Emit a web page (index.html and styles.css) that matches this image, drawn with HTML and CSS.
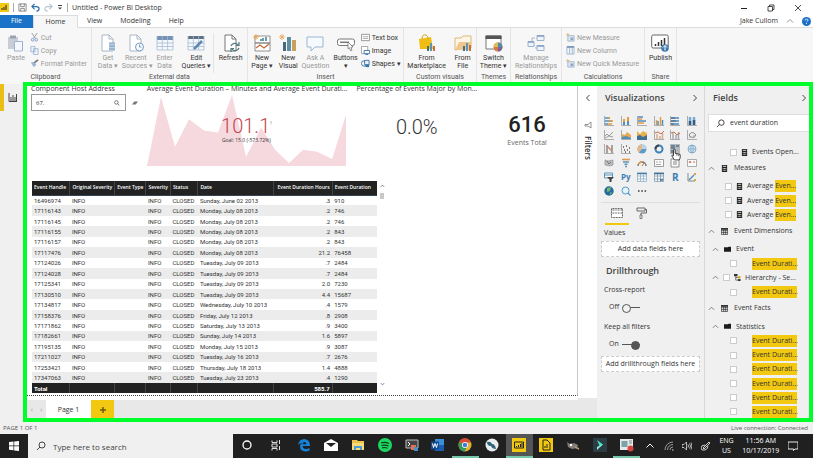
FILE: index.html
```html
<!DOCTYPE html>
<html lang="en">
<head>
<meta charset="utf-8">
<title>Untitled - Power BI Desktop</title>
<link rel="stylesheet" href="styles.css">
</head>
<body>
<svg class="defs" aria-hidden="true">
  <symbol id="page" viewBox="0 0 18 18"><path d="M3 1h7l4 4v12H3z" fill="#fff" stroke="currentColor"/><path d="M10 1v4h4" fill="none" stroke="currentColor"/></symbol>
  <symbol id="chevr" viewBox="0 0 8 8"><path d="M2.500 1l3 3-3 3" fill="none" stroke="#444"/></symbol>
  <symbol id="up" viewBox="0 0 8 8"><path d="M1 5.500l3-3 3 3" fill="none" stroke="currentColor" stroke-width=".9"/></symbol>
  <symbol id="mag" viewBox="0 0 10 10"><circle cx="6" cy="4" r="3" fill="none" stroke="currentColor"/><path d="M4 6L1 9" stroke="currentColor"/></symbol>
  <symbol id="calc" viewBox="0 0 8 8"><path d="M1 0h6v8H1z" fill="#222"/><path d="M2 1.500h4M2 4h1m.5 0h1m.5 0h1M2 6h1m.5 0h1m.5 0h1" stroke="#eee"/></symbol>
  <symbol id="grid" viewBox="0 0 8 8"><path d="M.5.500h7v7h-7zM.5 3h7M.5 5.200h7M3 1v6.500M5.300 1v6.500" fill="none" stroke="#333" stroke-width=".8"/><path d="M0 0h8v2H0z" fill="#333"/></symbol>
  <symbol id="folder" viewBox="0 0 9 8"><path d="M0 1h5l1-1h3v7H0z" fill="#1c1c1c"/></symbol>
  <symbol id="axes" viewBox="0 0 10 10"><path d="M.5 0v9.500H10" fill="none" stroke="#999" stroke-width=".8"/></symbol>
</svg>
<div class="app">
  <header class="titlebar">
    <svg class="logo" viewBox="0 0 9 9"><path d="M0 0h9v9H0z" fill="#f2c811"/><path d="M2 7V5M4 7V4M6 7V2" stroke="#222"/></svg>
    <span class="bar"></span>
    <button class="ib" aria-label="Save"><svg viewBox="0 0 10 10"><path d="M1 1h8v8H1zM3 1v3h4V1M3 9V6h4v3" fill="none" stroke="#666" stroke-width=".8"/></svg></button>
    <button class="ib" aria-label="Undo"><svg viewBox="0 0 10 10"><path d="M4 1L1 4l3 3M1 4h5q3 0 3 2.500T6 9" fill="none" stroke="#2d6dae" stroke-width="1.300"/></svg></button>
    <button class="ib" aria-label="Redo"><svg viewBox="0 0 10 10"><path d="M6 1l3 3-3 3M9 4H4Q1 4 1 6.500T4 9" fill="none" stroke="#b8c4d0" stroke-width="1.300"/></svg></button>
    <button class="ib small" aria-label="Customize"><svg viewBox="0 0 6 6"><path d="M1 1h4" stroke="#444"/><path d="M1 3h4L3 5z" fill="#444"/></svg></button>
    <span class="bar"></span>
    <h1>Untitled - Power BI Desktop</h1>
    <div class="win">
      <button aria-label="Minimize"><svg viewBox="0 0 8 8"><path d="M1 4.500h6" stroke="#222"/></svg></button>
      <button aria-label="Restore"><svg viewBox="0 0 8 8"><path d="M1 2.500h4.500V7H1zM2.500 2.500V1H7v4.500H5.500" fill="none" stroke="#222" stroke-width=".8"/></svg></button>
      <button aria-label="Close"><svg viewBox="0 0 8 8"><path d="M1 1l6 6M7 1L1 7" stroke="#222" stroke-width=".8"/></svg></button>
    </div>
  </header>
  <nav class="tabs">
    <button class="file">File</button><button class="on">Home</button><button>View</button><button>Modeling</button><button>Help</button>
    <span class="user">Jake Cullom</span>
    <svg class="s8 grey" viewBox="0 0 8 8"><use href="#up"/></svg>
    <svg class="s9" viewBox="0 0 9 9"><circle cx="4.500" cy="4.500" r="4.500" fill="#1a6fc9"/><path d="M3 3.500Q3 2 4.500 2T6 3.300Q6 4 4.500 5M4.500 6v1" fill="none" stroke="#fff" stroke-width=".8"/></svg>
  </nav>
  <section class="ribbon">
    <div class="group clip">
      <div class="tools">
        <button class="big off"><svg viewBox="0 0 18 18"><path d="M1 3h10v12H1z" fill="#c9ced6"/><path d="M3 1.500h6v3H3z" fill="#9aa3b0"/><path d="M7.500 7.500h8v9.500h-8z" fill="#f4f8fc" stroke="#9cb2cc"/></svg>Paste</button>
        <div class="list off">
          <button><svg viewBox="0 0 10 10"><path d="M2 0l4 6M8 0L4 6" stroke="#999"/><circle cx="3" cy="7.500" r="1.500" fill="none" stroke="#7b9dc4"/><circle cx="7" cy="7.500" r="1.500" fill="none" stroke="#7b9dc4"/></svg>Cut</button>
          <button><svg viewBox="0 0 10 10"><path d="M1 .5h4.500v6H1zM4 3h5v6.500H4z" fill="#eef4fa" stroke="#8ca6c4" stroke-width=".8"/></svg>Copy</button>
          <button><svg viewBox="0 0 10 10"><path d="M1 4l4-1 2 4-3 2z" fill="#9cb4d0"/><path d="M5 4l4-3" stroke="#777" stroke-width="2"/></svg>Format Painter</button>
        </div>
      </div>
      <h2>Clipboard</h2>
    </div>
    <div class="group ext">
      <div class="tools">
        <button class="big off"><svg class="pale" viewBox="0 0 18 18"><use href="#page"/><path d="M10 9h6v8h-6z" fill="#b9cde4"/><path d="M10 9h6M10 12h6M10 15h6" stroke="#7d9cc0"/></svg>Get<br>Data <i>▾</i></button>
        <button class="big off"><svg class="pale" viewBox="0 0 18 18"><use href="#page"/><circle cx="12.500" cy="13" r="4" fill="#f7fbff" stroke="#7d9cc0"/><path d="M12.500 10.500V13h2" fill="none" stroke="#7d9cc0"/></svg>Recent<br>Sources <i>▾</i></button>
        <button class="big off"><svg viewBox="0 0 18 18"><path d="M1 2h16v14H1z" fill="#f4f8fc"/><path d="M1 2h16v4H1z" fill="#7591b5"/><path d="M1 9h16M1 12.500h16M1 16h16M1 2v14M6.300 2v14M11.600 2v14M17 2v14" stroke="#a8bbd3" stroke-width=".8"/></svg>Enter<br>Data</button>
        <button class="big"><svg viewBox="0 0 18 18"><path d="M1 2h16v14H1z" fill="#f4f8fc"/><path d="M1 2h16v3H1z" fill="#5f7184"/><path d="M1 9h16M1 12.500h16M1 16h16M1 2v14M6.300 2v14M11.600 2v14M17 2v14" stroke="#a8bbd3" stroke-width=".8"/><path d="M7 15l8-8" stroke="#6486ad" stroke-width="2.500"/></svg>Edit<br>Queries <i>▾</i></button>
        <button class="big refresh"><svg viewBox="0 0 18 18"><use href="#page"/><path d="M9 12a4 4 0 017-1M17 8v3.500h-3M17 14a4 4 0 01-7 1M9 18v-3.500h3" fill="none" stroke="#517a80" stroke-width="1.200"/></svg>Refresh</button>
      </div>
      <h2>External data</h2>
    </div>
    <div class="group ins">
      <div class="tools">
        <button class="big"><svg viewBox="0 0 18 18"><path d="M2 2h15v7H2zM2 9h15v8H2z" fill="#fff" stroke="#777" stroke-width=".8"/><path d="M8 7V5M10 7V4M13 7V3" stroke="#3b7f93" stroke-width="1.500"/><path d="M3 14l4-3 4 3 5-4" fill="none" stroke="#c76b3c" stroke-width="1.300"/><path d="M3 0v6M0 3h6M1 1l4 4M5 1L1 5" stroke="#eba24d" stroke-width=".8"/></svg>New<br>Page <i>▾</i></button>
        <button class="big"><svg viewBox="0 0 18 18"><path d="M4 8h3v9H4z" fill="#47697a"/><path d="M8 3h4v14H8z" fill="#5e8fa2"/><path d="M13 6h4v11h-4z" fill="#c8a15e"/><path d="M3 0v6M0 3h6M1 1l4 4M5 1L1 5" stroke="#eba24d" stroke-width=".8"/></svg>New<br>Visual</button>
        <button class="big off"><svg viewBox="0 0 18 18"><path d="M1 3h16v10H9l-4 4v-4H1z" fill="#f5faff" stroke="#9cb4d3"/></svg>Ask A<br>Question</button>
        <button class="big"><svg viewBox="0 0 18 18"><rect x=".5" y="5" width="17" height="6.500" rx="2" fill="#fff" stroke="#777"/><path d="M3 8.300h9" stroke="#777" stroke-width="1.500"/><path d="M11 8l5 5-2 .2 1 3-1.500.5-1-3-1.500 1z" fill="#fff" stroke="#666" stroke-width=".7"/></svg>Buttons<br><i>▾</i></button>
        <div class="list">
          <button><svg viewBox="0 0 10 10"><path d="M.5 1.500h9v7h-9z" fill="#fff" stroke="#777" stroke-width=".8"/><path d="M2 4h2M5 4h3M2 6h6" stroke="#888" stroke-width=".8"/></svg>Text box</button>
          <button><svg viewBox="0 0 10 10"><path d="M.5.500h7v8h-7z" fill="#fff" stroke="#888" stroke-width=".8"/><path d="M3.500 5h6v3.500h-6zM5 9.500h3" fill="#fff" stroke="#3971ab"/></svg>Image</button>
          <button><svg viewBox="0 0 10 10"><circle cx="3.500" cy="5" r="3" fill="none" stroke="#3971ab"/><path d="M4 1.500h5v5H4z" fill="#e8f1fa" stroke="#3971ab"/><path d="M5 6h4v3H5z" fill="#3971ab"/></svg>Shapes <i>▾</i></button>
        </div>
      </div>
      <h2>Insert</h2>
    </div>
    <div class="group cus">
      <div class="tools">
        <button class="big"><svg viewBox="0 0 18 18"><path d="M1 5l12-2 2 12H2z" fill="#efbd13"/><path d="M4 5q0-5 4-4 2 1 2 4" fill="none" stroke="#d5a510"/><path d="M10 17V12" stroke="#456e83" stroke-width="2"/><path d="M13 17V9" stroke="#5c95ad" stroke-width="2"/><path d="M16 17v-5" stroke="#be704b" stroke-width="2"/></svg>From<br>Marketplace</button>
        <button class="big"><svg viewBox="0 0 18 18"><path d="M1 16V4h6l2-2h8v12z" fill="#fdf5e6" stroke="#ddb77a"/><path d="M1 16l4-8h12v8z" fill="#edc78d"/><path d="M10 17v-5" stroke="#456e83" stroke-width="2"/><path d="M13 17V9" stroke="#5c95ad" stroke-width="2"/><path d="M16 17v-6" stroke="#be704b" stroke-width="2"/></svg>From<br>File</button>
      </div>
      <h2>Custom visuals</h2>
    </div>
    <div class="group">
      <div class="tools"><button class="big"><svg viewBox="0 0 18 18"><path d="M1 2h15v13H1z" fill="#fff" stroke="#777"/><path d="M.5 1.500h16V5H.5z" fill="#555"/><circle cx="13" cy="13" r="4.500" fill="#d7774e"/><path d="M13 13V8.500a4.500 4.500 0 014.500 4.500z" fill="#4a8eac"/><path d="M13 13h4.500a4.500 4.500 0 01-4.500 4.500z" fill="#7d6295"/><path d="M13 13H8.500A4.500 4.500 0 0113 8.500z" fill="#ddbd56"/></svg>Switch<br>Theme <i>▾</i></button></div>
      <h2>Themes</h2>
    </div>
    <div class="group">
      <div class="tools"><button class="big off"><svg viewBox="0 0 18 18"><path d="M8 4H5v7h3M8 14h4" fill="none" stroke="#a9b7c9"/><path d="M10 1.500h7v5h-7zM1 7.500h6v5H1zM10 11.500h7v5h-7z" fill="#eef4fb" stroke="#9cb2cd"/><path d="M10 2h7M1 8h6M10 12h7" stroke="#86a0c0" stroke-width="1.500"/></svg>Manage<br>Relationships</button></div>
      <h2>Relationships</h2>
    </div>
    <div class="group calc">
      <div class="tools"><div class="list off">
        <button><svg viewBox="0 0 10 10"><path d="M2 3h7v6H2z" fill="#dce7f3" stroke="#a5b8ce"/><path d="M5 5h3v3H5z" fill="#8ca6c4"/><path d="M0 2h4M2 0v4" stroke="#d9b98c"/></svg>New Measure</button>
        <button><svg viewBox="0 0 10 10"><path d="M1 1h8v8H1zM4 1v8M7 1v8" fill="#eef4fb" stroke="#a5b8ce"/><path d="M1 1h8" stroke="#7e99b8" stroke-width="2"/></svg>New Column</button>
        <button><svg viewBox="0 0 10 10"><path d="M2 3h7v6H2z" fill="#dce7f3" stroke="#a5b8ce"/><path d="M5 5h3v3H5z" fill="#8ca6c4"/><path d="M0 2h4M2 0v4" stroke="#d9b98c"/></svg>New Quick Measure</button>
      </div></div>
      <h2>Calculations</h2>
    </div>
    <div class="group">
      <div class="tools"><button class="big"><svg viewBox="0 0 18 18"><rect x=".7" y="1" width="16.500" height="13" rx="1.500" fill="#fff" stroke="#666"/><path d="M4.500 12v-2M7.500 12V8M10.500 12V6M13.500 12V4" stroke="#333" stroke-width="1.500"/><circle cx="14" cy="14" r="3.800" fill="#3d78ad"/><path d="M14 16.500v-5M12 13.500l2-2 2 2" fill="none" stroke="#fff"/></svg>Publish</button></div>
      <h2>Share</h2>
    </div>
    <div class="rest"></div>
  </section>

  <main class="work">
    <aside class="rail"><button aria-label="Report"><svg viewBox="0 0 9 9"><path d="M1 0v8.500h8M3 8V4M5 8V2M7 8V4M8.500 8V1" fill="none" stroke="#444"/></svg></button></aside>
    <section class="center">
      <div class="canvas">
        <div class="cards">
          <div class="card slicer"><h3><label for="host">Component Host Address</label></h3>
            <div class="srow"><div class="sbox"><input id="host" value="67."><svg class="s6" viewBox="0 0 10 10"><g transform="matrix(-1 0 0 1 10 0)"><use href="#mag"/></g></svg></div>
            <svg class="s6" viewBox="0 0 8 8"><path d="M0 6l3-4h5L5 6z" fill="#777"/></svg></div>
          </div>
          <div class="card trend"><h3>Average Event Duration – Minutes and Average Event Durati...</h3>
            <div class="plot">
              <svg viewBox="0 0 199 71" preserveAspectRatio="none"><path d="M0 71L14 3 28 52 42 25 57 36 71 38 85 1 99 62 114 33 128 55 142 68 156 55 170 57 185 64 199 20V71z" fill="#f6d9de"/></svg>
              <div class="kpi"><strong>101.1<sup>!</sup></strong><span>Goal: 15.0 (-573.72%)</span></div>
            </div>
          </div>
          <div class="card pct"><h3>Percentage of Events Major by Mon...</h3><p>0.0%</p></div>
          <div class="card total"><p>616</p><span>Events Total</span></div>
        </div>
        <div class="tablewrap">
          <table>
            <colgroup><col class="c1"><col class="c2"><col class="c3"><col class="c4"><col class="c5"><col class="c6"><col class="c7"><col class="c8"></colgroup>
            <thead><tr><th>Event Handle</th><th>Original Severity</th><th>Event Type</th><th>Severity</th><th>Status</th><th>Date</th><th>Event Duration Hours</th><th>Event Duration</th></tr></thead>
            <tbody>
            <tr><td>16496974</td><td>INFO</td><td></td><td>INFO</td><td>CLOSED</td><td>Sunday, June 02 2013</td><td>.3</td><td>910</td></tr>
            <tr><td>17116143</td><td>INFO</td><td></td><td>INFO</td><td>CLOSED</td><td>Monday, July 08 2013</td><td>.2</td><td>746</td></tr>
            <tr><td>17116145</td><td>INFO</td><td></td><td>INFO</td><td>CLOSED</td><td>Monday, July 08 2013</td><td>.2</td><td>746</td></tr>
            <tr><td>17116155</td><td>INFO</td><td></td><td>INFO</td><td>CLOSED</td><td>Monday, July 08 2013</td><td>.2</td><td>843</td></tr>
            <tr><td>17116157</td><td>INFO</td><td></td><td>INFO</td><td>CLOSED</td><td>Monday, July 08 2013</td><td>.2</td><td>843</td></tr>
            <tr><td>17117476</td><td>INFO</td><td></td><td>INFO</td><td>CLOSED</td><td>Monday, July 08 2013</td><td>21.2</td><td>76458</td></tr>
            <tr><td>17124026</td><td>INFO</td><td></td><td>INFO</td><td>CLOSED</td><td>Tuesday, July 09 2013</td><td>.7</td><td>2484</td></tr>
            <tr><td>17124028</td><td>INFO</td><td></td><td>INFO</td><td>CLOSED</td><td>Tuesday, July 09 2013</td><td>.7</td><td>2484</td></tr>
            <tr><td>17125341</td><td>INFO</td><td></td><td>INFO</td><td>CLOSED</td><td>Tuesday, July 09 2013</td><td>2.0</td><td>7230</td></tr>
            <tr><td>17130510</td><td>INFO</td><td></td><td>INFO</td><td>CLOSED</td><td>Tuesday, July 09 2013</td><td>4.4</td><td>15687</td></tr>
            <tr><td>17134817</td><td>INFO</td><td></td><td>INFO</td><td>CLOSED</td><td>Wednesday, July 10 2013</td><td>.4</td><td>1579</td></tr>
            <tr><td>17158376</td><td>INFO</td><td></td><td>INFO</td><td>CLOSED</td><td>Friday, July 12 2013</td><td>.8</td><td>2908</td></tr>
            <tr><td>17171862</td><td>INFO</td><td></td><td>INFO</td><td>CLOSED</td><td>Saturday, July 13 2013</td><td>.9</td><td>3400</td></tr>
            <tr><td>17182661</td><td>INFO</td><td></td><td>INFO</td><td>CLOSED</td><td>Sunday, July 14 2013</td><td>1.6</td><td>5897</td></tr>
            <tr><td>17195135</td><td>INFO</td><td></td><td>INFO</td><td>CLOSED</td><td>Monday, July 15 2013</td><td>.9</td><td>3087</td></tr>
            <tr><td>17211027</td><td>INFO</td><td></td><td>INFO</td><td>CLOSED</td><td>Tuesday, July 16 2013</td><td>.7</td><td>2676</td></tr>
            <tr><td>17253421</td><td>INFO</td><td></td><td>INFO</td><td>CLOSED</td><td>Thursday, July 18 2013</td><td>1.4</td><td>4888</td></tr>
            <tr><td>17347063</td><td>INFO</td><td></td><td>INFO</td><td>CLOSED</td><td>Tuesday, July 23 2013</td><td>.4</td><td>1290</td></tr>
            </tbody>
            <tfoot><tr><td>Total</td><td></td><td></td><td></td><td></td><td></td><td>585.7</td><td></td></tr></tfoot>
          </table>
          <div class="scroll"><svg viewBox="0 0 6 6"><path d="M1 4l2-2 2 2" fill="none" stroke="#666"/></svg><b></b><svg viewBox="0 0 6 6"><path d="M1 2l2 2 2-2" fill="none" stroke="#3a6ea8"/></svg></div>
        </div>
      </div>
      <nav class="pages"><div class="arrows"><button aria-label="Previous">‹</button><button aria-label="Next">›</button></div><button class="pg">Page 1</button><button class="add" aria-label="New page"><svg viewBox="0 0 8 8"><path d="M4 1v6M1 4h6" stroke="#6b5a10" stroke-width="1.500"/></svg></button></nav>
    </section>
    <aside class="filters">
      <svg class="s8" viewBox="0 0 8 8"><path d="M5.500 1l-3 3 3 3" fill="none" stroke="#444"/></svg>
      <svg class="s8" viewBox="0 0 8 8"><path d="M7 1v6L4 5H1V3.500h3z" fill="none" stroke="#777" stroke-width=".8"/></svg>
      <h3>Filters</h3>
    </aside>
    <aside class="viz">
      <div class="head"><h3>Visualizations</h3><svg class="s8" viewBox="0 0 8 8"><use href="#chevr"/></svg></div>
      <div class="icons">
        <svg viewBox="0 0 10 10"><use href="#axes"/><path d="M1 2h5M1 5h7M1 8h3" stroke="#4c8fc4" stroke-width="1.500"/><path d="M4 2h2M5 5h4M4 8h4" stroke="#e59c3c" stroke-width="1.500"/></svg>
        <svg viewBox="0 0 10 10"><use href="#axes"/><path d="M3 3v6M7 1v8" stroke="#e59c3c" stroke-width="2"/><path d="M3 6v3M7 5v4" stroke="#4c8fc4" stroke-width="2"/></svg>
        <svg viewBox="0 0 10 10"><use href="#axes"/><path d="M1 1h5M1 5h8" stroke="#4c8fc4" stroke-width="1.300"/><path d="M1 3h4M1 7h6" stroke="#e59c3c" stroke-width="1.300"/></svg>
        <svg viewBox="0 0 10 10"><use href="#axes"/><path d="M2.500 4v5M6.500 1v8" stroke="#e59c3c" stroke-width="1.500"/><path d="M4 5v4M8.500 4v5" stroke="#4c8fc4" stroke-width="1.500"/></svg>
        <svg viewBox="0 0 10 10"><use href="#axes"/><path d="M1 2h8M1 5h8M1 8h8" stroke="#345c82" stroke-width="1.500"/><path d="M5 2h4M6 5h3M4 8h5" stroke="#74aed6" stroke-width="1.500"/></svg>
        <svg viewBox="0 0 10 10"><use href="#axes"/><path d="M3 1v8M7 1v8" stroke="#74aed6" stroke-width="2.500"/><path d="M3 5v4M7 4v5" stroke="#345c82" stroke-width="2.500"/></svg>
        <svg viewBox="0 0 10 10"><use href="#axes"/><path d="M1 6l2-2 2 2 4-4M1 8l4-2 4 1" fill="none" stroke="#888" stroke-width=".8"/></svg>
        <svg viewBox="0 0 10 10"><use href="#axes"/><path d="M1 9V4l3 1 2-3 4 3v4z" fill="#e9a656"/><path d="M1 9V7l4-1 5 2v1z" fill="#548fb8"/></svg>
        <svg viewBox="0 0 10 10"><path d="M0 10V1l3 3 3-3 4 2v7z" fill="#e8b14c"/><path d="M0 10V6l3-1 3 2 4-2v5z" fill="#3f6f94"/></svg>
        <svg viewBox="0 0 10 10"><use href="#axes"/><path d="M3 4v5M6 6v3M8.500 3v6" stroke="#d8a98d" stroke-width="1.500"/><path d="M1 3l3-1 3 2 3-3" fill="none" stroke="#c0734d"/></svg>
        <svg viewBox="0 0 10 10"><use href="#axes"/><path d="M3 3v6M6 5v4M8.500 2v7" stroke="#a7acb3" stroke-width="1.500"/><path d="M1 3l3-1 3 3 3-2" fill="none" stroke="#c0734d"/></svg>
        <svg viewBox="0 0 10 10"><use href="#axes"/><path d="M2 5q3-5 7 0-3 5-7 0" fill="none" stroke="#888"/><path d="M3 6v2M7 5v3" stroke="#999"/></svg>
        <svg viewBox="0 0 10 10"><use href="#axes"/><path d="M3 1v8M8 1v8" stroke="#888" stroke-width="1.500"/><path d="M3 2l5 5" stroke="#c98b6c" stroke-width="1.500"/></svg>
        <svg viewBox="0 0 10 10"><use href="#axes"/><path d="M2 3h1M5 2h1M8 4h1M3 6h1M6 6h1M8 8h1M4 8h1" stroke="#555" stroke-width="1.300"/></svg>
        <svg viewBox="0 0 10 10"><circle cx="5" cy="5" r="4.500" fill="#5d9bc9"/><path d="M5 5V.500A4.500 4.500 0 002 8.500z" fill="#e3b98c"/><path d="M5 5V.500a4.500 4.500 0 014.500 4.500z" fill="#b9d4e8"/></svg>
        <svg viewBox="0 0 10 10"><circle cx="5" cy="5" r="3.500" fill="none" stroke="#3c82b8" stroke-width="2"/><path d="M5 1.500A3.500 3.500 0 001.500 5" fill="none" stroke="#444" stroke-width="2"/></svg>
        <svg class="sel" viewBox="0 0 10 10"><path d="M0 0h10v10H0z" fill="#b5b9bd"/><path d="M1 1h4v4H1zM6 1h3v2H6zM1 6h4v3H1z" fill="#6d8494"/></svg>
        <svg viewBox="0 0 10 10"><circle cx="5" cy="5" r="4" fill="#e9f3fa" stroke="#6f9ec0" stroke-width=".8"/><path d="M1 5h8M5 1v8M5 1Q1 5 5 9M5 1q4 4 0 8" fill="none" stroke="#6f9ec0" stroke-width=".7"/></svg>
        <svg viewBox="0 0 10 10"><path d="M1 2l3 1 5-1v5L6 8 1 7z" fill="#b9bec4" stroke="#888" stroke-width=".6"/><path d="M3 3l2 3 2-2" stroke="#777" fill="none"/></svg>
        <svg viewBox="0 0 10 10"><path d="M1 1.500h8" stroke="#e09a4c" stroke-width="1.600"/><path d="M2 4h6M3.500 6.300h3M4 8.500h2" stroke="#5c93b8" stroke-width="1.500"/></svg>
        <svg viewBox="0 0 10 10"><path d="M1 8a4 4 0 018 0" fill="none" stroke="#777" stroke-width="1.500"/><path d="M1.500 6A4 4 0 015 4" fill="none" stroke="#e59c3c" stroke-width="1.500"/><path d="M5 8l2-3" stroke="#c0734d"/></svg>
        <svg viewBox="0 0 10 10"><path d="M.5 1.500h9v7h-9z" fill="#fafafa" stroke="#888" stroke-width=".8"/><path d="M2 4h2M5 4h2M2 6.500h5" stroke="#999" stroke-width=".8"/></svg>
        <svg viewBox="0 0 10 10"><path d="M1 1h8v8H1z" fill="#fafafa" stroke="#777" stroke-width=".8"/><path d="M3 4h4M3 6h4" stroke="#888"/></svg>
        <svg viewBox="0 0 10 10"><path d="M.5 1.500h9v7h-9z" fill="#fafafa" stroke="#999" stroke-width=".8"/><path d="M2 5l1-2 1 2M6 4h2" stroke="#c4704b" fill="none"/></svg>
        <svg viewBox="0 0 10 10"><path d="M.5 1h8v5h-8zM.5 3h8" fill="#fafafa" stroke="#5c93b8"/><path d="M3 5h7L7.500 7.500V10h-2V7.500z" fill="#444"/></svg>
        <b class="py">Py</b>
        <svg viewBox="0 0 10 10"><path d="M.5 1h9v8.500h-9zM.5 4h9M.5 7h9M3.500 1v8M6.500 1v8" fill="#fafafa" stroke="#8fb0c8" stroke-width=".8"/><path d="M0 1.500h10" stroke="#4c7fa4" stroke-width="1.500"/></svg>
        <svg viewBox="0 0 10 10"><path d="M.5 1h9v8.500h-9zM.5 4h9M.5 7h9M3.500 1v8M6.500 1v8" fill="#fafafa" stroke="#7d9cb2" stroke-width=".8"/><path d="M0 1.500h10M6 8h3" stroke="#44728f" stroke-width="1.500"/></svg>
        <b class="r">R</b>
        <svg viewBox="0 0 10 10"><path d="M1 1v8h7" fill="none" stroke="#888"/><path d="M2 8l5-5" stroke="#4d8fbb" stroke-width="1.500"/><path d="M7 1h2v2H7z" fill="#e59c3c"/><path d="M7 7h2v2H7z" fill="#c4b24a"/></svg>
        <svg viewBox="0 0 10 10"><circle cx="5" cy="5" r="4.700" fill="#246b9f"/><path d="M3 2l4-1-1 4-3 1zM6 6l2 1-2 2z" fill="#73b56b"/></svg>
        <svg viewBox="0 0 10 10"><circle cx="4.500" cy="4.500" r="3.500" fill="#e6f3fb" stroke="#4e9bcd"/><path d="M7 7l2.500 2.500" stroke="#4e9bcd" stroke-width="1.300"/></svg>
        <svg viewBox="0 0 10 10"><path d="M1 5h1.500M4.300 5h1.500M7.600 5h1.500" stroke="#333" stroke-width="1.500"/></svg>
        <svg class="hand" viewBox="0 0 12 15"><path d="M4 14L1 9q0-2 2 0V2q1-2 2 0v4l6 1.500v4L10 14z" fill="#fff" stroke="#222"/><path d="M7 7v2M9 7.500v2" stroke="#444" stroke-width=".8"/></svg>
      </div>
      <div class="vtabs">
        <button class="on" aria-label="Fields"><svg viewBox="0 0 12 12"><path d="M.5 1.500h11v9H.5z" fill="#fff" stroke="#555" stroke-dasharray="1 .6"/><path d="M.5 3h11M.5 6h11" stroke="#555" stroke-dasharray="1 .6"/></svg></button>
        <button aria-label="Format"><svg viewBox="0 0 12 12"><path d="M2 1h8v3H2zM10 2.500h1.500V6H6v2" fill="none" stroke="#666"/><path d="M5 8h2v3.500H5z" fill="none" stroke="#666" stroke-width=".8"/></svg></button>
      </div>
      <p class="lab">Values</p>
      <div class="drop">Add data fields here</div>
      <h3 class="drill">Drillthrough</h3>
      <p class="lab">Cross-report</p>
      <label class="tog">Off <input type="checkbox"></label>
      <p class="lab">Keep all filters</p>
      <label class="tog">On <input type="checkbox" checked></label>
      <div class="drop">Add drillthrough fields here</div>
    </aside>
    <aside class="fields">
      <div class="head"><h3>Fields</h3><svg class="s8" viewBox="0 0 8 8"><use href="#chevr"/></svg></div>
      <label class="find"><svg class="s9" viewBox="0 0 10 10"><use href="#mag"/></svg><input value="event duration" aria-label="Search fields"></label>
      <div class="tree">
        <label class="leaf m deep"><input type="checkbox"><svg viewBox="0 0 8 8"><use href="#calc"/></svg>Events Open...</label>
        <div class="grp"><svg class="up" viewBox="0 0 8 8"><use href="#up"/></svg><svg viewBox="0 0 8 8"><use href="#calc"/></svg>Measures</div>
        <label class="leaf m"><input type="checkbox"><svg viewBox="0 0 8 8"><use href="#calc"/></svg><span>Average <mark>Even...</mark></span></label>
        <label class="leaf m"><input type="checkbox"><svg viewBox="0 0 8 8"><use href="#calc"/></svg><span>Average <mark>Even...</mark></span></label>
        <label class="leaf m"><input type="checkbox"><svg viewBox="0 0 8 8"><use href="#calc"/></svg><span>Average <mark>Even...</mark></span></label>
        <div class="grp"><svg class="up" viewBox="0 0 8 8"><use href="#up"/></svg><svg viewBox="0 0 8 8"><use href="#grid"/></svg>Event Dimensions</div>
        <div class="fold"><svg class="up" viewBox="0 0 8 8"><use href="#up"/></svg><svg viewBox="0 0 9 8"><use href="#folder"/></svg>Event</div>
        <label class="leaf d"><input type="checkbox"><mark>Event Durati...</mark></label>
        <div class="fold h"><svg class="up" viewBox="0 0 8 8"><use href="#up"/></svg><input type="checkbox" aria-label="Hierarchy"><svg viewBox="0 0 8 8"><path d="M2 2v5h3M2 4h3" fill="none" stroke="#444" stroke-width=".8"/><path d="M0 0h4v2.500H0z" fill="#333"/><path d="M4.500 2.500h3V5h-3z" fill="#d3a918"/><path d="M4.500 5.800h3V8h-3z" fill="#333"/></svg>Hierarchy - Se...</div>
        <label class="leaf d"><input type="checkbox"><mark>Event Durati...</mark></label>
        <div class="grp"><svg class="up" viewBox="0 0 8 8"><use href="#up"/></svg><svg viewBox="0 0 8 8"><use href="#grid"/></svg>Event Facts</div>
        <div class="fold"><svg class="up" viewBox="0 0 8 8"><use href="#up"/></svg><svg viewBox="0 0 9 8"><use href="#folder"/></svg>Statistics</div>
        <label class="leaf d"><input type="checkbox"><mark>Event Durati...</mark></label>
        <label class="leaf d"><input type="checkbox"><mark>Event Durati...</mark></label>
        <label class="leaf d"><input type="checkbox"><mark>Event Durati...</mark></label>
        <label class="leaf d"><input type="checkbox"><mark>Event Durati...</mark></label>
        <label class="leaf d"><input type="checkbox"><mark>Event Durati...</mark></label>
        <label class="leaf d"><input type="checkbox"><mark>Event Durati...</mark></label>
      </div>
    </aside>
    <div class="frame"></div>
  </main>
  <footer class="status"><span>PAGE 1 OF 1</span><span>Live connection: Connected</span></footer>
  <footer class="taskbar">
    <button class="start" aria-label="Start"><svg viewBox="0 0 10 10"><path d="M0 1l4.500-.5v4H0zM5.200.500L10 0v4.500H5.200zM0 5.300h4.500v4L0 8.800zM5.200 5.300H10V10l-4.800-.6z" fill="#fff"/></svg></button>
    <label class="tsearch"><svg class="s10" viewBox="0 0 10 10"><use href="#mag"/></svg><input placeholder="Type here to search" aria-label="Search"></label>
    <div class="apps">
      <button aria-label="Cortana"><svg viewBox="0 0 14 14"><circle cx="7" cy="7" r="4" fill="none" stroke="#fff" stroke-width="1.300"/></svg></button>
      <button aria-label="Task view"><svg viewBox="0 0 14 14"><path d="M3 2.500v2h5v-2M3 6h5v3H3zM3 12.500v-2h5v2M10.500 2v4M10.500 8v4" fill="none" stroke="#ddd"/></svg></button>
      <button aria-label="Edge"><svg viewBox="0 0 14 14"><path d="M1 7Q2 1 7.500 1 13 1.500 13 8H5.500q.5 3 3.500 3 2 0 3.500-1v2.500Q11 13.500 8.500 13.500 3 13 3 8.500 3 6 5.500 4.500 2.500 5 1 7zM5.500 6.200h4Q9 4 7.500 4T5.500 6.200z" fill="#1683d8"/></svg></button>
      <button aria-label="Mail"><svg viewBox="0 0 14 14"><path d="M0 5l7-4 7 4v8H0z" fill="#fff"/><path d="M2 5h10L7 9z" fill="#222"/></svg></button>
      <button aria-label="Explorer"><svg viewBox="0 0 14 14"><path d="M1 2h5l1 1h6v9H1z" fill="#efc14b"/><path d="M1 5h12v7H1z" fill="#fbd976"/><path d="M3 12V8h8v4H9v-2H5v2z" fill="#4e9ed6"/></svg></button>
      <button aria-label="Spotify"><svg viewBox="0 0 14 14"><circle cx="7" cy="7" r="7" fill="#1ed760"/><path d="M3 5q4-1.500 8 .5M3.500 7.500q3.500-1 7 .5M4 9.800q3-.8 5.500.5" fill="none" stroke="#143c21" stroke-width="1.200"/></svg></button>
      <button aria-label="Paint tools"><svg viewBox="0 0 14 14"><path d="M1 2h12v8H1z" fill="#444" stroke="#bbb"/><path d="M3 4l2 2-2 2" fill="none" stroke="#fff"/><path d="M6 7h5v5H6z" fill="#dd7450"/><path d="M9 9h4v4H9z" fill="#4a8fc7"/></svg></button>
      <button aria-label="Word"><svg viewBox="0 0 14 14"><path d="M4 1h9v12H4z" fill="#3d8ed8"/><path d="M4 7h9v6H4z" fill="#1b5cb3"/><path d="M0 3.500h8v8H0z" fill="#154a94"/><path d="M1.500 5.500l1 4 1.500-4 1.500 4 1-4" fill="none" stroke="#fff"/></svg></button>
      <button class="open" aria-label="Chrome"><svg viewBox="0 0 14 14"><circle cx="7" cy="7" r="6.500" fill="#e1b32c"/><path d="M7 7L1 4A6.500 6.500 0 0113 4.500L7 4.500z" fill="#d84a38"/><path d="M7 7L1.300 4A6.500 6.500 0 006.500 13.500L9 9z" fill="#39985a"/><circle cx="7" cy="7" r="3" fill="#fff"/><circle cx="7" cy="7" r="2.300" fill="#3f7de0"/></svg></button>
      <button aria-label="Workbench"><svg viewBox="0 0 14 14"><circle cx="7" cy="7" r="6.500" fill="#e8edf0"/><path d="M2 4q4-1 5 2 3 0 4 5-4 0-5-3Q2 8 2 4z" fill="#2e6379"/></svg></button>
      <button class="open active" aria-label="Power BI"><svg viewBox="0 0 14 14"><path d="M0 0h14v14H0z" fill="#f2c811"/><path d="M2.500 4h9v6h-9z" fill="none" stroke="#222"/><path d="M4.500 9V8M6.500 9V7M8.500 9V6M10 9V5" stroke="#222"/></svg></button>
      <button aria-label="Power BI file"><svg viewBox="0 0 14 14"><path d="M0 0h14v14H0z" fill="#f2c811"/><path d="M4 2h4l3 3v7H4z" fill="none" stroke="#222"/><path d="M6 10V8M8 10V6" stroke="#222"/></svg></button>
      <button aria-label="Gimp"><svg viewBox="0 0 14 14"><path d="M1 4l3 2 4-1 4 2-1 3-5 1-4-2z" fill="#817d78"/><circle cx="5" cy="7" r="1.200" fill="#fff"/><path d="M9 9l4 2" stroke="#b89b78" stroke-width="1.500"/></svg></button>
      <button aria-label="Filmora"><svg viewBox="0 0 14 14"><path d="M0 0h14v14H0z" fill="#2b3c45"/><path d="M4 2l6 4.500L7 9z" fill="#4ce0c0"/><path d="M10 6l-6 6V9z" fill="#92f0d8"/></svg></button>
      <button class="open" aria-label="Recorder"><svg viewBox="0 0 14 14"><path d="M0 1h13v11H0z" fill="#e5e9ea"/><path d="M1.500 3h6v6h-6z" fill="#7aa2a8"/><path d="M9 3h3M9 5h3" stroke="#888"/><circle cx="10.500" cy="10.500" r="3" fill="#d64541"/></svg></button>
    </div>
    <div class="tray">
      <svg viewBox="0 0 10 10"><path d="M1.500 6.500L5 3l3.500 3.500" fill="none" stroke="#fff"/></svg>
      <svg viewBox="0 0 10 10"><path d="M1 9A8 8 0 019 1M3.500 9A6 6 0 019 3.500M6 9a3 3 0 013-3" fill="none" stroke="#999"/><path d="M8 9h1.500" stroke="#ddd"/></svg>
      <svg viewBox="0 0 10 10"><path d="M0 3.500h2L4.500 1v8L2 6.500H0zM6 3.500q1 1.500 0 3M7.500 2.500q2 2.500 0 5M9 1.500q2 3.500 0 7" fill="none" stroke="#ddd" stroke-width=".8"/></svg>
      <svg viewBox="0 0 10 10"><path d="M2 7L8 1l1 1-6 6zM4 4Q0 4 0 7t4 2q3-1 3-4" fill="none" stroke="#ddd" stroke-width=".9"/></svg>
      <p>ENG<br>US</p><p>11:56 AM<br>10/17/2019</p>
      <svg viewBox="0 0 10 10"><path d="M0 1h10v7H7L5.500 9.500V8H0z" fill="none" stroke="#fff" stroke-width=".9"/></svg>
    </div>
  </footer>
</div>
</body>
</html>
```
FILE: styles.css
```css
* { box-sizing: border-box; margin: 0; padding: 0; }
body { background: #fff; color: #333; font: 7px/8px "Open Sans", "Noto Sans", sans-serif; }
button, input { font: inherit; color: inherit; background: none; border: 0; border-radius: 0; min-width: 0; }
h1, h2, h3 { font-size: inherit; font-weight: 400; }
svg { display: block; flex: none; }
i { font-style: normal; }
.defs { position: absolute; width: 0; height: 0; }
.s6 { width: 6px; height: 6px; }
.s8 { width: 8px; height: 8px; }
.s9 { width: 9px; height: 9px; }
.s10 { width: 10px; height: 10px; }
.grey { color: #888; }

.app { min-height: 100vh; display: flex; flex-direction: column; padding: 0 2px 2px 0; }

.titlebar { height: 15px; display: flex; align-items: center; gap: 4px; }
.logo { width: 9px; height: 9px; }
.bar { width: 1px; height: 9px; background: #aaa; }
.ib { width: 9px; height: 9px; }
.ib.small { width: 6px; }
.ib svg { width: 100%; height: 9px; }
.titlebar h1 { flex: 1; }
.win { display: flex; gap: 19px; padding-right: 11px; }
.win svg { width: 8px; height: 8px; }

.tabs { height: 13px; display: flex; align-items: center; border-bottom: 1px solid #dcdcdc; }
.tabs button { height: 13px; padding: 0 9px; }
.tabs .file { width: 33px; padding: 0; background: #1a73c7; color: #fff; }
.tabs .on { width: 45px; padding: 0; background: #f7f7f7; border: 1px solid #dcdcdc; border-bottom: 0; }
.user { margin-left: auto; }
.tabs svg { margin-left: 8px; }
.tabs .s9 { margin-right: 2px; }

.ribbon { height: 56px; background: #f7f7f7; font-family: Roboto, "Open Sans", sans-serif; display: grid; grid-template-columns: 92fr 156fr 156fr 73fr 34fr 51fr 83fr 32fr 136fr; }
.group { display: flex; flex-direction: column; min-width: 0; border-right: 1px solid #e4e4e4; padding: 5px 0 3px; }
.group h2 { display: flex; justify-content: center; color: #555; white-space: nowrap; }
.tools { flex: 1; display: flex; justify-content: center; align-items: start; }
.big { text-align: center; white-space: nowrap; }
.big svg { width: 18px; height: 18px; margin: 1px auto 2px; color: #777; }
.big .pale { color: #a8b6c8; }
.off { color: #999; }
.list { display: flex; flex-direction: column; gap: 4px; }
.list button { display: flex; align-items: center; gap: 2px; height: 9px; white-space: nowrap; }
.list svg { width: 9px; height: 9px; }
.clip .tools { justify-content: space-between; padding: 0 4px 0 7px; }
.ext .tools { display: grid; grid-template-columns: 28fr 28fr 30fr 34fr 34fr; padding-left: 2px; }
.ext .refresh { align-self: stretch; display: flex; flex-direction: column; align-items: center; border-left: 1px solid #e4e4e4; justify-content: flex-start; }
.refresh svg { flex: none; }
.ins .tools { display: grid; grid-template-columns: 28fr 24fr 30fr 30fr 42fr; }
.cus .tools { display: grid; grid-template-columns: 44fr 26fr; }
.calc .tools { padding: 0 4px; justify-content: flex-start; }

.work { flex: 1; display: flex; position: relative; background: #f0f0f0; }
.rail { width: 27px; background: #f0f0f0; }
.rail button { width: 100%; height: 27px; border-left: 4px solid #e9bf16; padding-left: 4px; }
.rail svg { width: 9px; height: 9px; }
.center { flex: 1; display: flex; flex-direction: column; background: #fff; min-width: 0; }
.canvas { border-bottom: 1px dotted #444; border-right: 1px solid #c8c8c8; height: 312px; padding-left: 4px; }
.cards { display: grid; grid-template-columns: 116fr 210fr 121fr 100fr; height: 97px; }
.card { min-width: 0; }
.card h3 { white-space: nowrap; line-height: 10px; height: 10px; }
.srow { display: flex; align-items: center; gap: 6px; }
.sbox { display: flex; align-items: center; width: 95px; height: 17px; border: 1px solid #999; padding: 0 5px 0 4px; }
.sbox input { flex: 1; width: 0; font-size: 6px; }
.plot { display: grid; width: 95%; }
.plot > * { grid-area: 1 / 1; }
.plot > svg { width: 100%; height: 72px; }
.kpi { text-align: center; padding-top: 21px; }
.kpi strong { display: block; font: 300 20px/22px Roboto, sans-serif; color: #c4424f; }
.kpi sup { font-size: 6px; line-height: 6px; color: #333; }
.kpi span { display: block; font-size: 5px; line-height: 6px; }
.pct p { font: 300 20px/22px Roboto, sans-serif; text-align: center; margin-top: 22px; }
.total { text-align: center; padding-top: 30px; }
.total p { font: 500 22px/22px Roboto, sans-serif; color: #222; }
.total span { display: block; line-height: 14px; color: #666; }

.tablewrap { display: flex; width: 65%; height: 212px; padding-left: 1px; }
table { border-collapse: collapse; table-layout: fixed; flex: 1; height: 212px; font: 6px/7px Roboto, sans-serif; }
.c1 { width: 11%; } .c2 { width: 13%; } .c3 { width: 9%; } .c4 { width: 7%; } .c5 { width: 8%; } .c6 { width: 22%; } .c7 { width: 17%; } .c8 { width: 13%; }
th, td { text-align: left; padding: 0 2px; white-space: nowrap; height: 10px; }
th { height: 14px; font: 600 5px/7px "Open Sans", sans-serif; }
thead, tfoot { background: #222; color: #fff; }
th + th, tfoot td + td { border-left: 1px solid #444; }
tbody tr:nth-child(even) { background: #ececec; }
tbody tr:first-child { border-top: 1px solid #345; }
tfoot { font-weight: 700; }
th:nth-child(7), td:nth-child(7) { text-align: right; }
.scroll { width: 9px; padding: 2px 0 6px 2px; display: flex; flex-direction: column; align-items: center; }
.scroll svg { width: 5px; height: 6px; }
.scroll b { width: 4px; height: 6px; background: #c8c8c8; margin: 4px 0 auto; }

.pages { margin-top: 4px; flex: 1; display: flex; background: #e8e8e8; }
.arrows { width: 19px; display: flex; justify-content: space-around; color: #999; }
.pg { width: 45px; background: #fff; }
.add { width: 23px; background: #f2c811; }
.add svg { width: 8px; height: 8px; margin: auto; }

.filters { width: 19px; background: #fff; display: flex; flex-direction: column; align-items: center; padding-top: 10px; border-bottom: 22px solid #e8e8e8; }
.filters svg + svg { margin-top: 19px; }
.filters h3 { writing-mode: vertical-rl; font-size: 8px; line-height: 10px; font-weight: 600; margin-top: 7px; }

.head { display: flex; justify-content: space-between; align-items: center; height: 14px; }
.head h3, .drill { font-size: 9px; line-height: 14px; font-weight: 600; color: #444; }
.viz { width: 108px; padding: 7px 4px 0; border-right: 1px solid #d8d8d8; }
.viz .head { padding: 0 1px 0 4px; }
.icons { position: relative; display: grid; grid-template-columns: repeat(6, 1fr); grid-auto-rows: 14px; align-items: center; justify-items: center; margin-top: 9px; padding-bottom: 4px; border-bottom: 1px solid #ddd; }
.icons svg { width: 10px; height: 10px; }
.icons b { color: #3d7fb5; font-size: 8px; }
.icons .r { font-size: 10px; }
.icons .hand { position: absolute; left: 70px; top: 34px; width: 10px; height: 13px; }
.vtabs { display: flex; padding-left: 4px; height: 22px; }
.vtabs button { width: 24px; border-bottom: 2px solid transparent; }
.vtabs .on { border-color: #f2c811; }
.vtabs svg { width: 12px; height: 12px; margin: auto; }
.lab { line-height: 16px; padding-left: 3px; }
.drop { height: 16px; background: #fff; border: 1px dashed #ccc; line-height: 14px; text-align: center; white-space: nowrap; }
.drill { padding-left: 5px; margin: 7px 0 4px; }
.tog { display: flex; align-items: center; gap: 3px; height: 18px; margin: 0 0 3px 8px; }
.tog input { appearance: none; width: 18px; height: 7px; background: linear-gradient(#555, #555) center / 100% 1px no-repeat; display: flex; }
.tog input::before { content: ""; width: 7px; height: 7px; border-radius: 50%; border: 1px solid #555; background: #f0f0f0; }
.tog input:checked { justify-content: flex-end; }
.tog input:checked::before { background: #555; }

.fields { width: 108px; padding: 7px 3px 0; }
.fields .head { padding: 0 2px 0 5px; }
.find { display: flex; align-items: center; gap: 5px; height: 18px; margin: 9px 0 13px; padding-left: 7px; background: #fff; border: 1px solid #ddd; }
.find input { flex: 1; width: 0; }
.tree { height: 274px; display: flex; flex-direction: column; justify-content: space-between; }
.tree > * { display: flex; align-items: center; height: 14px; white-space: nowrap; }
.tree svg { width: 7px; height: 7px; }
.tree .up { color: #666; }
.tree input { appearance: none; width: 7px; height: 7px; background: #fff; border: 1px solid #ccc; }
.tree .grp { margin: 2px 0 4px; gap: 6px; }
.tree .fold { padding-left: 4px; gap: 5px; }
.tree .h { gap: 4px; }
.tree .m { padding-left: 17px; gap: 4px; }
.tree .deep { padding-left: 22px; }
.tree .d { padding-left: 22px; gap: 15px; }
mark { background: #f2c811; color: inherit; display: inline-block; line-height: 12px; }
.tree .d mark { width: 45px; }
.frame { position: absolute; inset: -2px 0 -2px 23px; border: 4px solid #00ff2a; pointer-events: none; }

.status { height: 14px; background: #f0f0f0; display: flex; justify-content: space-between; align-items: center; padding: 1px 5px 0 3px; color: #555; font-size: 6px; }
.taskbar { height: 24px; background: #202020; color: #fff; display: flex; }
.start { width: 28px; }
.start svg { width: 10px; height: 10px; margin: auto; }
.tsearch { width: 205px; background: #f0f0f0; color: #444; display: flex; align-items: center; gap: 7px; padding-left: 8px; font-size: 8px; }
.tsearch input { flex: 1; }
.tsearch input::placeholder { color: #444; }
.apps { flex: 1; display: grid; grid-template-columns: 29fr 29fr repeat(13, 27fr); }
.apps button { border-bottom: 2px solid transparent; }
.apps .open { border-color: #76c8a8; }
.apps .active { background: #555; }
.apps svg { width: 14px; height: 14px; margin: auto; }
.tray { width: 173px; display: flex; align-items: center; justify-content: space-between; padding: 0 15px 0 5px; text-align: center; }
.tray svg { width: 10px; height: 10px; }
.tray p { line-height: 10px; }
```
